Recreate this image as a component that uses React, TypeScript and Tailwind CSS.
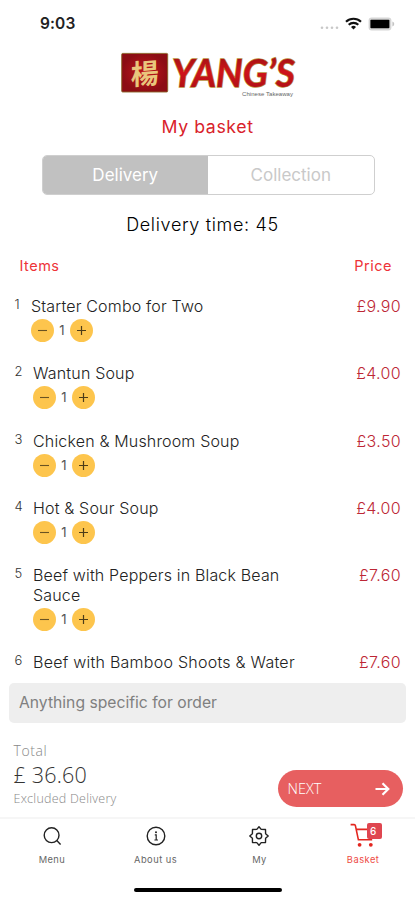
import React from 'react';

interface BasketItem {
  id: number;
  name: string;
  price: string;
  quantity: number;
}

const items: BasketItem[] = [
  { id: 1, name: 'Starter Combo for Two', price: '£9.90', quantity: 1 },
  { id: 2, name: 'Wantun Soup', price: '£4.00', quantity: 1 },
  { id: 3, name: 'Chicken & Mushroom Soup', price: '£3.50', quantity: 1 },
  { id: 4, name: 'Hot & Sour Soup', price: '£4.00', quantity: 1 },
  { id: 5, name: 'Beef with Peppers in Black Bean Sauce', price: '£7.60', quantity: 1 },
];

const StatusBar: React.FC = () => (
  <div className="flex h-[47px] shrink-0 items-center justify-between pl-10 pr-[20px]">
    <span className="text-[15.5px] font-semibold tracking-[0.1px] text-[#222]">9:03</span>
    <div className="flex items-center">
      <svg width="20" height="14" viewBox="0 0 20 14" fill="#c8c8c8">
        <circle cx="2" cy="10.8" r="1.3" />
        <circle cx="7" cy="10.8" r="1.3" />
        <circle cx="12" cy="10.8" r="1.3" />
        <circle cx="17" cy="10.8" r="1.3" />
      </svg>
      <svg className="ml-[5px]" width="17" height="13" viewBox="0 0 17 13" fill="none" stroke="#111" strokeWidth="2.1">
        <path d="M1 4.8a10.8 10.8 0 0 1 15 0" />
        <path d="M3.7 7.8a7 7 0 0 1 9.6 0" />
        <path d="M8.5 12.4 6 9.9a3.6 3.6 0 0 1 5 0Z" fill="#111" stroke="none" />
      </svg>
      <svg className="ml-1.5" width="27" height="14" viewBox="0 0 27 14">
        <rect x="0.6" y="0.6" width="22.8" height="12.8" rx="3" fill="#d6d6d6" />
        <rect x="2.4" y="2.8" width="19" height="8.4" rx="0.8" fill="#000" />
        <path d="M24.4 4.6c1.2.4 1.8 1.3 1.8 2.4s-.6 2-1.8 2.4Z" fill="#c4c4c4" />
      </svg>
    </div>
  </div>
);

const Logo: React.FC = () => (
  <svg className="mx-auto mt-[5px] shrink-0" width="178" height="48" viewBox="0 0 178 48">
    <defs>
      <radialGradient id="seal">
        <stop offset="0" stopColor="#c4161c" />
        <stop offset="1" stopColor="#8c0d14" />
      </radialGradient>
      <linearGradient id="brand" x1="0" y1="0" x2="0" y2="1">
        <stop offset="0" stopColor="#8e1210" />
        <stop offset="0.5" stopColor="#cf131a" />
        <stop offset="1" stopColor="#a30f14" />
      </linearGradient>
    </defs>
    <rect x="2.7" y="1.4" width="46" height="38.6" rx="1" fill="url(#seal)" stroke="#8b6428" strokeWidth="0.9" />
    <text
      x="27.5"
      y="32"
      textAnchor="middle"
      fontSize="28"
      fontWeight="700"
      fill="#e9c67c"
      transform="rotate(-5 25 20) skewX(-5)"
      className="font-['Noto_Sans_CJK_TC',sans-serif]"
    >
      楊
    </text>
    <text
      x="53"
      y="35"
      fontSize="39"
      fontWeight="700"
      fontStyle="italic"
      textLength="123"
      lengthAdjust="spacingAndGlyphs"
      fill="url(#brand)"
      stroke="#b98d3c"
      strokeWidth="1.4"
      paintOrder="stroke"
      className="font-['Lato',sans-serif]"
    >
      YANG’S
    </text>
    <text x="123" y="43.5" fontSize="6" textLength="51" fill="#666" className="font-['Liberation_Sans',sans-serif]">
      Chinese Takeaway
    </text>
  </svg>
);

const QuantityControl: React.FC<{ quantity: number }> = ({ quantity }) => (
  <div className="mt-[3px] flex items-center">
    <button className="flex size-[23px] items-center justify-center rounded-full bg-[#fdc54d]">
      <svg width="11" height="11" viewBox="0 0 11 11" stroke="#6a5322" strokeWidth="1.1">
        <path d="M1 5.5h9" />
      </svg>
    </button>
    <span className="w-4 text-center text-[13px] leading-[23px] text-[#555]">{quantity}</span>
    <button className="flex size-[23px] items-center justify-center rounded-full bg-[#fdc54d]">
      <svg width="11" height="11" viewBox="0 0 11 11" stroke="#4d3c18" strokeWidth="1.2">
        <path d="M1 5.5h9M5.5 1v9" />
      </svg>
    </button>
  </div>
);

const BasketRow: React.FC<{ item: BasketItem }> = ({ item }) => (
  <div className="flex items-start pb-[21.3px]">
    <span className={`shrink-0 pl-[14.5px] text-[13px] leading-4 font-light text-[#333] ${item.id === 1 ? 'w-[31px]' : 'w-[33px]'}`}>{item.id}</span>
    <div className="w-[270px]">
      <p className="text-base leading-5 font-light tracking-[0.17px] text-[#222]">{item.name}</p>
      <QuantityControl quantity={item.quantity} />
    </div>
    <span className="ml-auto pr-[14px] text-base leading-5 font-light tracking-[0.35px] text-[#bd2735]">{item.price}</span>
  </div>
);

const BottomNav: React.FC = () => (
  <nav className="grid h-[83px] shrink-0 grid-cols-4 border-t-2 border-[#f6f6f6] bg-white">
    <div className="flex flex-col items-center pt-[7px]">
      <svg width="20" height="20" viewBox="0 0 20 20" fill="none" stroke="#222" strokeWidth="1.4">
        <circle cx="9.6" cy="9.2" r="7.4" />
        <path d="m14.8 14.6 3.8 3.8" />
      </svg>
      <span className="mt-2 text-[9.3px] leading-3 tracking-[0.4px] text-[#666]">Menu</span>
    </div>
    <div className="flex flex-col items-center pt-[7px]">
      <svg width="20" height="20" viewBox="0 0 20 20" fill="none" stroke="#222" strokeWidth="1.4">
        <circle cx="10" cy="10" r="8.8" />
        <path d="M8.8 8.8h1.4v5M8.4 14h3.6" strokeWidth="1.2" />
        <circle cx="10" cy="6.2" r="1" fill="#222" stroke="none" />
      </svg>
      <span className="mt-2 text-[9.3px] leading-3 tracking-[0.5px] text-[#666]">About us</span>
    </div>
    <div className="flex flex-col items-center pt-[7px]">
      <svg width="20" height="20" viewBox="0 0 20 20" fill="none" stroke="#222" strokeWidth="1.4" strokeLinejoin="round">
        <path d="M10 .8 12.2 3.4 16.5 3.5 16.6 7.8 19.2 10 16.6 12.2 16.5 16.5 12.2 16.6 10 19.2 7.8 16.6 3.5 16.5 3.4 12.2 .8 10 3.4 7.8 3.5 3.5 7.8 3.4Z" />
        <circle cx="10" cy="10" r="2.7" />
      </svg>
      <span className="mt-2 text-[9.3px] leading-3 tracking-[0.4px] text-[#666]">My</span>
    </div>
    <div className="flex flex-col items-center pt-[4px]">
      <div className="relative">
        <svg width="26" height="26" viewBox="0 0 26 26" fill="none" stroke="#e3261f" strokeWidth="1.6">
          <path d="M.6 1.6h3.6q1 0 1.2 1L8.4 16.8h13.8M6 6.4h17l-1.6 8.2" />
          <circle cx="9.6" cy="21.8" r="1.9" fill="#e3261f" stroke="none" />
          <circle cx="20.8" cy="21.8" r="1.9" fill="#e3261f" stroke="none" />
        </svg>
        <span className="absolute top-0 left-[17px] flex h-[16px] w-[15px] items-center justify-center rounded-[2px] bg-[#df4650] pr-[3px] text-[10px] font-medium text-white">
          6
        </span>
      </div>
      <span className="mt-[5px] text-[9.3px] leading-3 tracking-[0.5px] text-[#ee4a44]">Basket</span>
    </div>
  </nav>
);

const App: React.FC = () => {
  return (
    <div className="flex h-[900px] w-[415px] flex-col overflow-hidden bg-white font-['Inter',sans-serif]">
      <StatusBar />
      <Logo />

      <h1 className="mt-[15px] text-center text-[17.7px] leading-6 tracking-[0.6px] text-[#d9222a]">My basket</h1>

      {/* Delivery / Collection */}
      <div className="mt-[16px] ml-[41.5px] grid h-10 w-[333px] shrink-0 grid-cols-2 overflow-hidden rounded-[5px] border border-[#cfcfcf] text-[17px]">
        <button className="bg-[#c1c1c1] pt-0.5 text-white">Delivery</button>
        <button className="pt-0.5 text-[#c9c9c9]">Collection</button>
      </div>

      <p className="mt-[18px] pr-2.5 text-center text-[18px] leading-6 font-light tracking-[0.65px] text-black">Delivery time: 45</p>

      <div className="mt-[19px] flex justify-between pr-[23px] pl-[19.5px] text-[14.5px] leading-5 tracking-[0.5px] text-[#ee3338]">
        <span>Items</span>
        <span>Price</span>
      </div>

      {/* Items */}
      <div className="mt-5 h-[385px] shrink-0 overflow-hidden">
        {items.map((item) => (
          <BasketRow key={item.id} item={item} />
        ))}
        <div className="flex items-start">
          <span className="w-[33px] shrink-0 pl-[14.5px] text-[13px] leading-4 font-light text-[#333]">6</span>
          <p className="text-base leading-5 font-light tracking-[0.25px] whitespace-nowrap text-[#222]">Beef with Bamboo Shoots & Water</p>
          <span className="ml-auto pr-[14px] text-base leading-5 font-light tracking-[0.35px] text-[#bd2735]">£7.60</span>
        </div>
      </div>

      <div className="mx-[9px] mt-[2px] flex h-10 shrink-0 items-center rounded-[5px] bg-[#eeeeee] pl-[10px] text-[15.7px] text-[#808080]">
        Anything specific for order
      </div>

      {/* Total */}
      <div className="flex flex-1 items-start justify-between pr-[12.5px] pl-[13.5px] font-['Open_Sans',sans-serif] font-light">
        <div className="pt-[18px]">
          <p className="text-[14px] leading-5 tracking-[0.6px] text-[#888]">Total</p>
          <p className="text-[21.5px] leading-7 tracking-[0.2px] text-[#333]">£ 36.60</p>
          <p className="text-[12.5px] leading-5 tracking-[0.25px] text-[#888]">Excluded Delivery</p>
        </div>
        <button className="mt-[47px] flex h-[37px] w-[125px] items-center justify-between rounded-full bg-[#e75f60] pr-[13px] pl-[10px] text-[14.5px] text-white">
          NEXT
          <svg width="15" height="14" viewBox="0 0 15 14" fill="none" stroke="#fff" strokeWidth="2.2">
            <path d="M.5 7h12.5M7.5 1.2 13.3 7l-5.8 5.8" />
          </svg>
        </button>
      </div>

      <BottomNav />
      <div className="mx-auto -mt-[12px] mb-[8px] h-1 w-[148px] shrink-0 rounded-full bg-black" />
    </div>
  );
};

export default App;
